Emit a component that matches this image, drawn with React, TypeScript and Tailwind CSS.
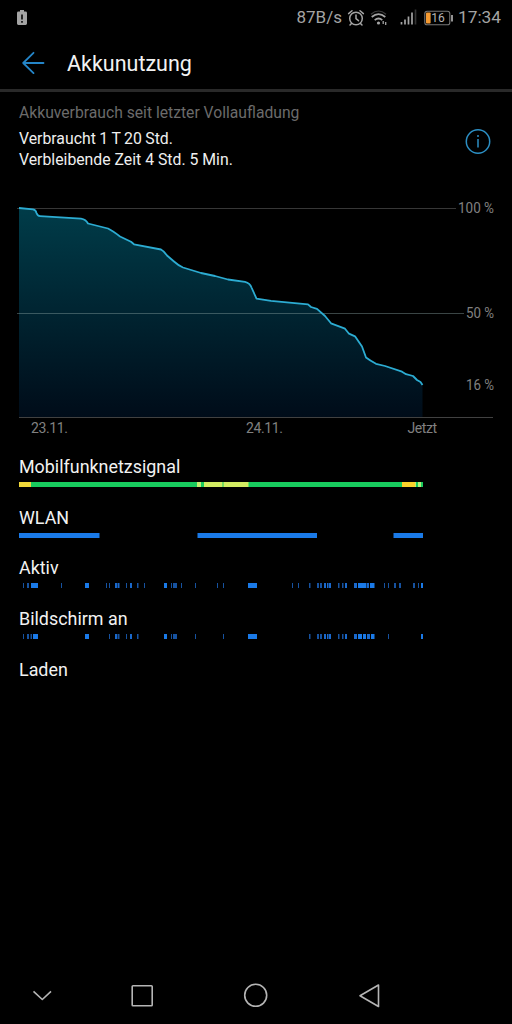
import type { ReactNode } from "react";

type Segment = [start: number, end: number, color?: string];

const BLUE = "#1a7ae8";
const DIM = "#1652a0";
const MID = "#1a69cc";
const LIME = "#d3ec62";
const GREEN = "#18cb5e";

const signal: Segment[] = [
  [0, 404, GREEN],
  [0, 12, "#f0d83a"],
  [178, 182, "#c2ef70"],
  [185, 203.5, LIME],
  [204.5, 229.5, LIME],
  [383, 396, "#fbd22c"],
  [396, 397, "#c2ef70"],
  [399, 402, "#b6f07a"],
];

const wlan: Segment[] = [
  [0, 80.5],
  [178.5, 298],
  [374.5, 404],
];

const active: Segment[] = [
  [4, 5, DIM], [8, 10, DIM], [12, 19], [42, 43, DIM], [66, 70],
  [87, 88, DIM], [90, 91, DIM], [96, 98, MID], [98.5, 100.5, MID], [107, 108, DIM],
  [111, 113, MID], [118, 119.5, DIM], [125, 126, DIM], [145, 148], [152, 153, DIM],
  [154, 158, DIM], [162, 163, DIM], [176, 177, DIM], [198, 199, DIM], [204, 205, DIM],
  [229, 238], [273, 274, DIM], [279, 280, DIM], [290, 291.5, DIM], [298, 300, DIM],
  [301, 303, DIM], [305, 307, MID], [308, 309.5, MID], [310, 312, MID], [319, 320.5, DIM],
  [323, 324.5, DIM], [326, 328, MID], [335, 338, MID], [339, 347], [347.5, 350, MID],
  [351, 355.5], [365, 366, DIM], [369, 370, DIM], [375, 377, DIM], [380, 382, DIM],
  [394, 396, DIM], [399, 400, DIM], [402, 404],
];

const screenOn: Segment[] = [
  [4, 5, DIM], [8, 10, DIM], [11.5, 13, DIM], [14, 19], [66, 70],
  [90, 91, DIM], [96, 98, MID], [98.5, 100.5, DIM], [107, 108, DIM], [111, 113, MID],
  [118, 119.5, DIM], [145, 148], [152, 153, DIM], [154, 158, DIM], [176, 177, DIM],
  [204, 205, DIM], [229, 238], [290, 291.5, DIM], [298, 300, DIM], [301, 303, DIM],
  [305, 307, MID], [308, 309.5, MID], [310, 312, MID], [319, 320.5, DIM], [323, 324.5, DIM],
  [326, 328, MID], [335, 338, MID], [339, 343], [344, 347], [348, 351, MID],
  [352, 355.5], [369, 370, DIM], [402, 404],
];

const level =
  "M19 208 L33 209.3 Q36 210 36.5 213 Q37.5 216 40 216.2 L81 218.6 Q86 219.5 88 223.5 L108 228.5 Q113 231 120 236.5 L131 241.8 L134 244.3 L161 249.5 Q164 251 167 255.5 L174 261.5 Q179 266 183 267.5 L201 273 L215 276 L228 279.5 L245 281.8 Q250 283 251.5 287.5 L256.5 298.7 L271 300.8 L308 304.3 L311 307 L317 308.8 L325 316 L331 323.3 L345 328.7 L349 333.7 L355 336.3 L362 346.5 L366 357.5 Q370 360.5 376 363.8 L385 366 L402 371.7 L406 374.2 L413 376 L417 380 L420.5 382 L422.5 385";

function UsageRow({ label, segments, children }: { label: string; segments?: Segment[]; children?: ReactNode }) {
  return (
    <section className="h-[50.7px]">
      <h2 className="h-[25px] text-[17.9px] leading-[20.5px] text-[#f2f2f2]">{label}</h2>
      {segments && (
        <svg className="block" width="404" height="5" viewBox="0 0 404 5" aria-hidden="true">
          {segments.map(([start, end, color], i) => (
            <rect key={i} x={start} width={end - start} height="5" fill={color ?? BLUE} />
          ))}
        </svg>
      )}
      {children}
    </section>
  );
}

function StatusBar() {
  return (
    <div className="flex h-[35px] items-center pl-[17px] pr-[11px] text-[#a4a4a4]">
      <svg width="10" height="17" viewBox="0 0 10 17" aria-hidden="true">
        <path d="M3 1h4v1.6h1.6Q10 2.6 10 4v10.6Q10 16 8.6 16H1.4Q0 16 0 14.6V4Q0 2.6 1.4 2.6H3Z" fill="#a4a4a4" />
        <path d="M5 5.5v5M5 12v1.8" stroke="#111" strokeWidth="1.7" />
      </svg>
      <span className="ml-auto text-[17px]">87B/s</span>
      <svg className="ml-[5px]" width="18" height="18" viewBox="0 0 18 18" fill="none" stroke="#a4a4a4" strokeWidth="1.5" strokeLinecap="round" aria-hidden="true">
        <circle cx="9" cy="9.5" r="6.3" />
        <path d="M9 6v3.7l2.5 2M1.6 4.6 5 1.7M13 1.7l3.4 2.9M4.5 14.4 3 16M13.5 14.4 15 16" />
      </svg>
      <svg className="ml-[5px]" width="18" height="18" viewBox="0 0 18 18" fill="none" aria-hidden="true">
        <path d="M1 5.2Q8.5-1.2 16 5.2" stroke="#3c3c3c" strokeWidth="1.2" />
        <path d="M1.7 8Q8.5 2.3 15.3 8M4.7 11.2Q8.5 7.8 12.3 11.2" stroke="#a4a4a4" strokeWidth="1.7" />
        <circle cx="8.5" cy="14" r="1.6" fill="#a4a4a4" />
        <path d="M13.2 12v3M15.7 13v3" stroke="#a4a4a4" strokeWidth="1.3" />
      </svg>
      <svg className="ml-3" width="17" height="17" viewBox="0 0 17 17" aria-hidden="true">
        <path d="M1.5 13v2.5M5 10.5v5M8.5 7.5v8M12 3.5v12" stroke="#a4a4a4" strokeWidth="1.7" />
        <path d="M15.5 .5v15" stroke="#333" strokeWidth="1.7" />
      </svg>
      <svg className="ml-[7px]" width="30" height="16" viewBox="0 0 30 16" aria-hidden="true">
        <rect x=".8" y="1.2" width="25" height="13.6" rx="2.4" fill="none" stroke="#777" strokeWidth="1.1" />
        <rect x="2" y="2.5" width="4.6" height="11" rx=".8" fill="#f59a32" />
        <path d="M28 5v6.5" stroke="#a4a4a4" strokeWidth="1.8" />
        <text x="7.2" y="12.2" fill="#b4b4b4" fontSize="12">16</text>
      </svg>
      <span className="ml-1 text-[17.3px]">17:34</span>
    </div>
  );
}

function BatteryChart() {
  return (
    <svg className="block" width="512" height="250" viewBox="0 195 512 250" role="img" aria-label="Akkuverlauf">
      <defs>
        <linearGradient id="fill" x1="0" y1="208" x2="0" y2="417" gradientUnits="userSpaceOnUse">
          <stop offset="0" stopColor="#003c49" />
          <stop offset=".5" stopColor="#002431" />
          <stop offset="1" stopColor="#000c19" />
        </linearGradient>
      </defs>
      <path d="M17 208.5H456" stroke="#373737" />
      <path d={`${level} V417 H19 Z`} fill="url(#fill)" />
      <path d="M17 313.5H464" stroke="#87a0a0" strokeOpacity=".43" />
      <path d="M19 417.5H493" stroke="#414141" />
      <path d={level} fill="none" stroke="#2cacd2" strokeWidth="1.8" strokeLinejoin="round" />
      <g fill="#808080" fontSize="14">
        <text x="458" y="213.4" textLength="36" lengthAdjust="spacingAndGlyphs">100 %</text>
        <text x="466" y="318.4" textLength="28" lengthAdjust="spacingAndGlyphs">50 %</text>
        <text x="466" y="390" textLength="28" lengthAdjust="spacingAndGlyphs">16 %</text>
        <text x="31" y="433.4" textLength="37">23.11.</text>
        <text x="246" y="433.4" textLength="37">24.11.</text>
        <text x="407.5" y="432.8" textLength="29.5">Jetzt</text>
      </g>
    </svg>
  );
}

export default function App() {
  return (
    <div className="flex h-[1024px] w-[512px] flex-col overflow-hidden bg-black font-['Roboto',sans-serif]">
      <StatusBar />
      <header className="flex h-[57px] items-center border-b-[3px] border-[#292929] pl-[22px]">
        <svg width="23" height="24" viewBox="0 0 23 24" fill="none" stroke="#2485c8" strokeWidth="1.8" strokeLinecap="round" strokeLinejoin="round" aria-hidden="true">
          <path d="M21.5 13H1.2M11.5 2.8 1.2 13l10.3 10.2" />
        </svg>
        <h1 className="ml-[22px] pt-[4px] text-[21.5px] leading-7 text-[#f2f2f2]">Akkunutzung</h1>
      </header>
      <div className="flex h-[103px] justify-between pl-[19px] pr-[21px]">
        <div className="pt-[10px] leading-[21px] text-[#efefef]">
          <p className="mb-[5px] text-[15.7px] text-[#6b6b6b]">Akkuverbrauch seit letzter Vollaufladung</p>
          <p className="text-[15.8px] [word-spacing:-0.4px]">Verbraucht 1 T 20 Std.</p>
          <p className="text-[15.8px]">Verbleibende Zeit 4 Std. 5 Min.</p>
        </div>
        <svg className="mt-[36px]" width="26" height="26" viewBox="0 0 26 26" fill="none" stroke="#2c8fc4" strokeWidth="1.5" aria-label="Info">
          <circle cx="13" cy="13.5" r="11.7" />
          <path d="M13 11v8.5M13 7v2" />
        </svg>
      </div>
      <BatteryChart />
      <main className="flex-1 pl-[19px] pt-[12px]">
        <UsageRow label="Mobilfunknetzsignal" segments={signal} />
        <UsageRow label="WLAN" segments={wlan} />
        <UsageRow label="Aktiv" segments={active} />
        <UsageRow label="Bildschirm an" segments={screenOn} />
        <UsageRow label="Laden" />
      </main>
      <nav className="flex h-[58px] items-center pl-[32px]">
        <svg width="350" height="28" viewBox="32 981 350 28" fill="none" stroke="#b5b5b5" strokeWidth="1.6" strokeLinejoin="round" aria-hidden="true">
          <path d="M33.5 991.3 42.3 999.5 51 991.3" />
          <rect x="132.2" y="985.7" width="20" height="20" rx=".8" />
          <circle cx="255.7" cy="995.3" r="11" />
          <path d="M378.5 985 360 995.7l18.5 10.8Z" />
        </svg>
      </nav>
    </div>
  );
}
